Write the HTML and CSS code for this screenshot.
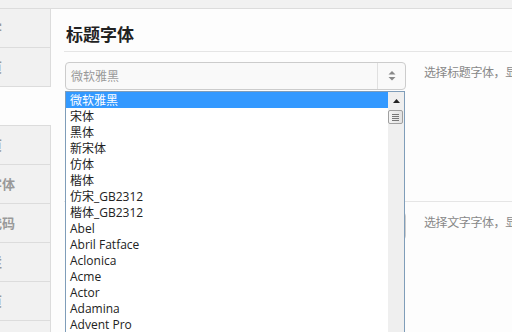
FILE: index.html
```html
<!DOCTYPE html>
<html lang="zh-CN">
<head>
    <meta charset="UTF-8">
    <meta name="viewport" content="width=device-width, initial-scale=1.0">
    <title>主题选项</title>
    <link rel="stylesheet" href="styles.css">
</head>
<body>
    <div class="topbar"></div>
    <div class="layout">
        <ul class="tabs">
            <li class="tab">头部字</li>
            <li class="tab">文章页</li>
            <li class="tab-gap"></li>
            <li class="tab tab-top">分类页</li>
            <li class="tab">正文字体</li>
            <li class="tab">统计代码</li>
            <li class="tab">侧边栏</li>
            <li class="tab">搜索页</li>
            <li class="tab">页脚</li>
        </ul>
        <main class="panel">
            <section class="option">
                <h3 class="option-title">标题字体</h3>
                <div class="option-row">
                    <div class="select-wrap">
                        <div class="select">
                            <span class="select-value">微软雅黑</span>
                            <span class="select-arrows">
                                <svg width="8" height="10" viewBox="0 0 8 10">
                                    <path d="M0.5 3.5 L4 0 L7.5 3.5 Z" fill="#888"/>
                                    <path d="M0.5 6 L4 9.5 L7.5 6 Z" fill="#888"/>
                                </svg>
                            </span>
                        </div>
                        <!-- open dropdown list -->
                        <div class="dropdown">
                            <ul class="dropdown-list">
                                <li class="selected">微软雅黑</li>
                                <li>宋体</li>
                                <li>黑体</li>
                                <li>新宋体</li>
                                <li>仿体</li>
                                <li>楷体</li>
                                <li>仿宋_GB2312</li>
                                <li>楷体_GB2312</li>
                                <li>Abel</li>
                                <li>Abril Fatface</li>
                                <li>Aclonica</li>
                                <li>Acme</li>
                                <li>Actor</li>
                                <li>Adamina</li>
                                <li>Advent Pro</li>
                                <li>Aguafina Script</li>
                            </ul>
                            <div class="scrollbar">
                                <div class="scroll-btn">
                                    <svg width="7" height="4" viewBox="0 0 7 4"><path d="M0 4 L3.5 0 L7 4 Z" fill="#222"/></svg>
                                </div>
                                <div class="scroll-thumb">
                                    <span></span><span></span><span></span><span></span>
                                </div>
                            </div>
                        </div>
                    </div>
                    <p class="option-desc">选择标题字体，显示在文章标题和页面标题中</p>
                </div>
            </section>
            <section class="option">
                <h3 class="option-title">正文字体</h3>
                <div class="option-row">
                    <div class="select-wrap">
                        <div class="select">
                            <span class="select-value">微软雅黑</span>
                            <span class="select-arrows">
                                <svg width="8" height="10" viewBox="0 0 8 10">
                                    <path d="M0.5 3.5 L4 0 L7.5 3.5 Z" fill="#888"/>
                                    <path d="M0.5 6 L4 9.5 L7.5 6 Z" fill="#888"/>
                                </svg>
                            </span>
                        </div>
                    </div>
                    <p class="option-desc">选择文字字体，显示在文章正文和侧边栏中</p>
                </div>
            </section>
        </main>
    </div>
</body>
</html>
```

FILE: styles.css
```css
body {
    margin: 0;
    width: 512px;
    height: 332px;
    overflow: hidden;
    background-color: #fdfdfd;
    font-family: "Noto Sans CJK SC", sans-serif;
}

.topbar {
    height: 8px;
    background-color: #f1f1f1;
    border-bottom: 1px solid #dcdcdc;
}

.layout {
    display: flex;
}

.tabs {
    list-style: none;
    margin: 0;
    padding: 0;
    width: 51px;
    flex: none;
}

.tab {
    height: 38px;
    line-height: 38px;
    background-color: #f1f1f1;
    border-right: 1px solid #dcdcdc;
    border-bottom: 1px solid #dcdcdc;
    color: #999;
    font-size: 13px;
    font-weight: bold;
    white-space: nowrap;
    overflow: hidden;
    text-indent: -37px;
}

.tab-top {
    border-top: 1px solid #dcdcdc;
}

.tab-gap {
    height: 38px;
}

.panel {
    flex: 1;
    min-width: 0;
    padding-left: 13px;
}

.option-title {
    margin: 0;
    height: 29px;
    padding: 13px 0 0 2px;
    line-height: 24px;
    font-size: 17px;
    font-weight: bold;
    color: #222;
    border-bottom: 1px solid #e5e5e5;
}

.option-row {
    display: flex;
    align-items: flex-start;
    gap: 18px;
    padding: 10px 0 69px 1px;
}

.select-wrap {
    position: relative;
    width: 341px;
    flex: none;
}

.select {
    display: flex;
    height: 26px;
    border: 1px solid #ccc;
    border-radius: 4px;
    background-color: #f9f9f9;
}

.select-value {
    flex: 1;
    padding-left: 5px;
    line-height: 26px;
    font-size: 12px;
    color: #999;
}

.select-arrows {
    width: 27px;
    border-left: 1px solid #e0e0e0;
    display: flex;
    align-items: center;
    justify-content: center;
}

.option-desc {
    margin: 0;
    padding-top: 2px;
    line-height: 16px;
    font-size: 12px;
    letter-spacing: -0.4px;
    color: #888;
    white-space: nowrap;
}

.dropdown {
    position: absolute;
    left: 0;
    top: 29px;
    z-index: 5;
    width: 340px;
    height: 260px;
    box-sizing: border-box;
    border: 1px solid #7f9db9;
    background-color: #fff;
    overflow: hidden;
}

.dropdown-list {
    list-style: none;
    margin: 0 16px 0 0;
    padding: 0;
}

.dropdown-list li {
    height: 16px;
    line-height: 17px;
    padding-left: 4px;
    font-family: "Open Sans", "Noto Sans CJK SC", sans-serif;
    font-size: 12px;
    color: #222;
    white-space: nowrap;
}

.dropdown-list li.selected {
    background-color: #3399ff;
    color: #fff;
}

.scrollbar {
    position: absolute;
    top: 0;
    right: 0;
    bottom: 0;
    width: 16px;
    background-color: #efefef;
}

.scroll-btn {
    height: 17px;
    display: flex;
    align-items: center;
    justify-content: center;
}

.scroll-thumb {
    margin: 1px 1px 0 0;
    height: 14px;
    box-sizing: border-box;
    border: 1px solid #a0a0a0;
    border-radius: 2px;
    background: linear-gradient(to right, #f4f4f4, #e2e2e2);
    display: flex;
    flex-direction: column;
    justify-content: center;
    gap: 1px;
    padding: 0 3px;
}

.scroll-thumb span {
    height: 1px;
    background-color: #777;
}
```
